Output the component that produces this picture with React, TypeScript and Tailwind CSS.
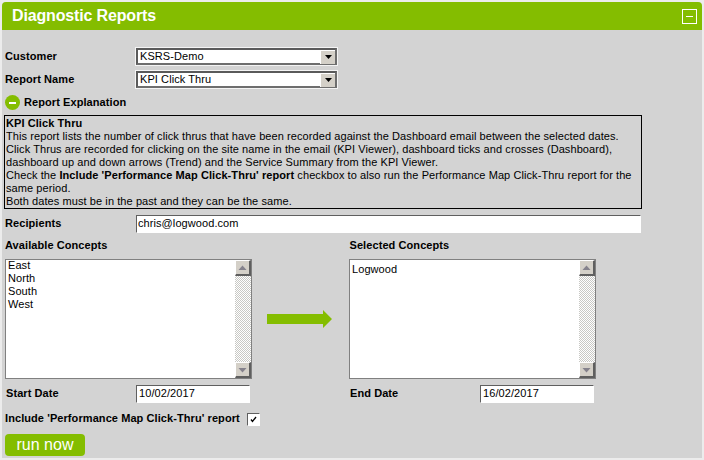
const sunken = "border border-t-[#5f5f5f] border-l-[#5f5f5f] border-b-white border-r-white";

function ScrollButton({ up }: { up?: boolean }) {
  return (
    <div className="flex h-4 w-4 shrink-0 items-center justify-center border-t border-l border-r-2 border-b-2 border-t-white border-l-white border-r-[#5f5f5f] border-b-[#5f5f5f] bg-[#d4d0c8]">
      <svg width="9" height="6" viewBox="0 0 9 6">
        <path d={up ? "M4.5 0.5 L8.5 5 L0.5 5 Z" : "M0.5 1 L8.5 1 L4.5 5.5 Z"} fill="#85828c" />
      </svg>
    </div>
  );
}

function ListBox({ items, offset }: { items: string[]; offset: string }) {
  return (
    <div className="flex h-[120px] w-[247px] shrink-0 border border-[#808080] bg-white">
      <div className={`flex-1 pl-[2px] text-[11px] leading-[13px] tracking-[0.08px] text-black ${offset}`}>
        {items.map((item) => (
          <div key={item}>{item}</div>
        ))}
      </div>
      <div className="flex w-4 shrink-0 flex-col justify-between bg-[repeating-conic-gradient(#c8c8c4_0_25%,#ffffff_0_50%)] bg-[length:2px_2px]">
        <ScrollButton up />
        <ScrollButton />
      </div>
    </div>
  );
}

function SelectBox({ value }: { value: string }) {
  return (
    <div className="h-[19px] w-[203px] border border-[#f4f4f4]">
      <div className="flex h-full items-center justify-between border-2 border-t-[#5a5a5a] border-l-[#5a5a5a] border-r-[#6e6e6e] border-b-[#6e6e6e] bg-white pl-[2px]">
        <span className="text-[11px] tracking-[0.08px] text-black">{value}</span>
        <div className="flex h-[14px] w-[15px] items-center justify-center border-t border-l border-t-white border-l-white bg-[#d4d0c8]">
          <svg width="7" height="4" viewBox="0 0 7 4">
            <path d="M0 0 H7 L3.5 4 Z" fill="#000000" />
          </svg>
        </div>
      </div>
    </div>
  );
}

function DateField({ value }: { value: string }) {
  return (
    <input
      readOnly
      value={value}
      className={`h-[18px] w-[114px] bg-white pb-[2px] pl-[2px] text-[11px] tracking-[0.08px] text-black outline-none ${sunken}`}
    />
  );
}

export default function App() {
  return (
    <div className="h-[460px] w-[704px] overflow-hidden bg-[#ececec] p-[2px] font-['Liberation_Sans',Arial,sans-serif]">
      <div className="h-[456px] w-[700px] rounded-tr-[4px] rounded-tl-[4px] bg-[#d3d3d3]">
        <div className="flex h-[28px] items-center justify-between rounded-tr-[4px] rounded-tl-[4px] bg-[#84bd00] pr-[5px] pl-[10px]">
          <h1 className="text-[16px] font-bold tracking-[-0.15px] text-white">Diagnostic Reports</h1>
          <button className="flex h-[15px] w-[15px] items-center justify-center border border-white">
            <span className="h-px w-[7px] bg-white" />
          </button>
        </div>

        <div className="pt-[17px] pl-[3px] text-[11px] tracking-[0.08px] text-black">
          <div className="flex h-[19px] items-center">
            <label className="w-[130px] font-bold">Customer</label>
            <SelectBox value="KSRS-Demo" />
          </div>
          <div className="mt-[4px] flex h-[19px] items-center">
            <label className="w-[130px] font-bold">Report Name</label>
            <SelectBox value="KPI Click Thru" />
          </div>
          <div className="mt-[6px] flex h-[15px] items-center gap-[4px]">
            <span className="flex h-[15px] w-[15px] items-center justify-center rounded-full bg-[#84bd00]">
              <span className="h-[2px] w-[7px] bg-white" />
            </span>
            <span className="font-bold">Report Explanation</span>
          </div>

          <div className="mt-[5px] ml-[-1px] h-[94px] w-[638px] border border-black px-[1px] pt-[1px] leading-[13px]">
            <div className="font-bold">KPI Click Thru</div>
            <div>This report lists the number of click thrus that have been recorded against the Dashboard email between the selected dates.</div>
            <div>Click Thrus are recorded for clicking on the site name in the email (KPI Viewer), dashboard ticks and crosses (Dashboard), dashboard up and down arrows (Trend) and the Service Summary from the KPI Viewer.</div>
            <div>
              Check the <b>Include 'Performance Map Click-Thru' report</b> checkbox to also run the Performance Map Click-Thru report for the same period.
            </div>
            <div>Both dates must be in the past and they can be the same.</div>
          </div>

          <div className="mt-[6px] flex h-[18px] items-center">
            <label className="mb-[2px] w-[131px] font-bold">Recipients</label>
            <input
              readOnly
              value="chris@logwood.com"
              className={`h-[18px] w-[505px] bg-white pb-[2px] pl-[1px] text-[11px] tracking-[0.08px] text-black outline-none ${sunken}`}
            />
          </div>

          <div className="mt-[6px] flex h-[13px] items-center">
            <div className="w-[344.5px] font-bold">Available Concepts</div>
            <div className="font-bold">Selected Concepts</div>
          </div>

          <div className="mt-[7px] flex items-center">
            <ListBox items={["East", "North", "South", "West"]} offset="mt-[-1px]" />
            <svg width="65" height="18" viewBox="0 0 65 18" className="mr-[17px] ml-[15px] shrink-0">
              <path d="M0 4 H56 V0 L65 9 L56 18 V14 H0 Z" fill="#84bd00" />
            </svg>
            <ListBox items={["Logwood"]} offset="pt-[3px]" />
          </div>

          <div className="mt-[6px] flex h-[18px] items-center pl-[1px]">
            <label className="mb-[2px] w-[130px] font-bold">Start Date</label>
            <DateField value="10/02/2017" />
            <label className="mb-[2px] ml-[100px] w-[130px] font-bold">End Date</label>
            <DateField value="16/02/2017" />
          </div>

          <div className="mt-[10px] flex h-[13px] items-center">
            <label className="mb-[2px] font-bold">Include 'Performance Map Click-Thru' report</label>
            <span className={`ml-[7px] flex h-[13px] w-[13px] items-center justify-center bg-white ${sunken}`}>
              <svg width="9" height="9" viewBox="0 0 9 9">
                <path d="M2 4.5 L3.5 6.5 L7 2" fill="none" stroke="#000000" strokeWidth="1.3" />
              </svg>
            </span>
          </div>

          <button className="mt-[8px] h-[22px] w-[80px] rounded-[4px] bg-[#84bd00] text-[16px] leading-[22px] tracking-normal text-white">
            run now
          </button>
        </div>
      </div>
    </div>
  );
}
